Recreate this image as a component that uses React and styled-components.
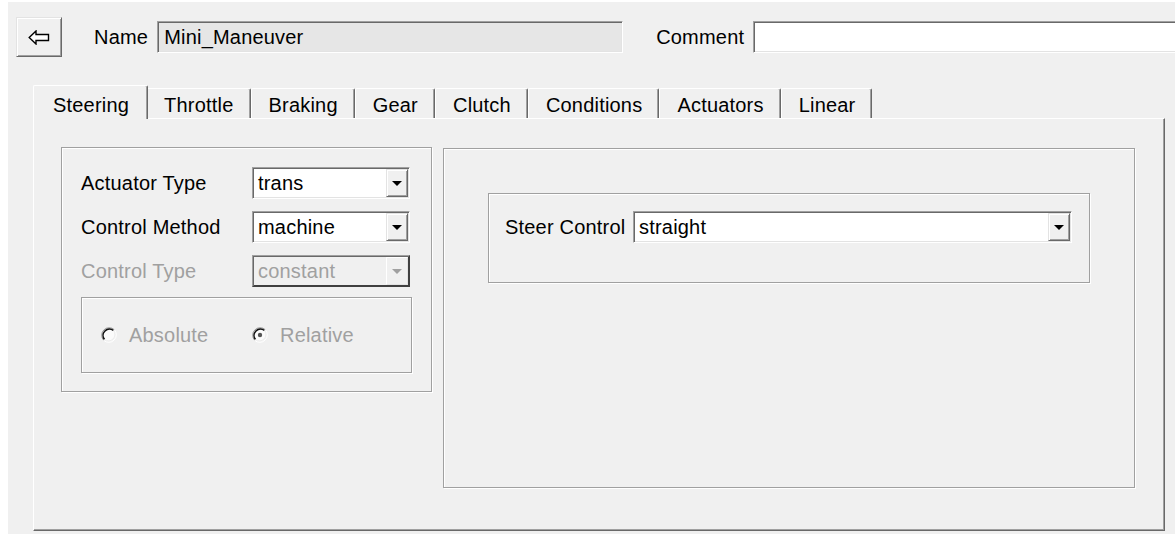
import React from 'react';
import styled, { createGlobalStyle, css } from 'styled-components';

const GlobalStyle = createGlobalStyle`
  html, body {
    margin: 0;
    background: #fff;
  }

  body {
    font-family: "Liberation Sans", Arial, sans-serif;
    font-size: 20px;
    letter-spacing: 0.2px;
    color: #000;
  }

  * {
    box-sizing: border-box;
  }
`;

const tabs = ['Steering', 'Throttle', 'Braking', 'Gear', 'Clutch', 'Conditions', 'Actuators', 'Linear'];

const BackArrow = () => (
  <svg width="22" height="15" viewBox="0 0 22 15">
    <path
      d="M1.2 7.5 L8 1 L8 4.5 L20.5 4.5 L20.5 10.5 L8 10.5 L8 14 Z"
      fill="#fff"
      stroke="#000"
      strokeWidth="1.4"
      strokeLinejoin="miter"
    />
  </svg>
);

const DropArrow = ({ disabled }) => (
  <svg width="10" height="5" viewBox="0 0 10 5">
    <path d="M0 0 H10 L5 5 Z" fill={disabled ? '#a0a0a0' : '#000'} />
  </svg>
);

// classic 3D radio: dark upper-left arcs, light lower-right arcs
const RadioMark = ({ checked }) => (
  <svg width="16" height="16" viewBox="0 0 16 16">
    <circle cx="8" cy="8" r="6.5" fill="#fbfbfb" />
    <path d="M2.7 13.3 A7.5 7.5 0 0 1 13.3 2.7" fill="none" stroke="#9a9a9a" />
    <path d="M3.5 12.5 A6.4 6.4 0 0 1 12.5 3.5" fill="none" stroke="#111" strokeWidth="1.6" />
    <path d="M13.3 2.7 A7.5 7.5 0 0 1 2.7 13.3" fill="none" stroke="#fff" />
    <path d="M12.5 3.5 A6.4 6.4 0 0 1 3.5 12.5" fill="none" stroke="#ececec" />
    {checked && <circle cx="8" cy="8" r="2.2" fill="#555" />}
  </svg>
);

const Combo = ({ value, disabled }) => (
  <ComboBox disabled={disabled}>
    <ComboText>{value}</ComboText>
    <DropButton disabled={disabled}>
      <DropArrow disabled={disabled} />
    </DropButton>
  </ComboBox>
);

const App = () => (
  <>
    <GlobalStyle />
    <Window>
      <TopBar>
        <BackButton>
          <BackArrow />
        </BackButton>
        <Label $gap={32}>Name</Label>
        <TextField $readonly $width={466}>Mini_Maneuver</TextField>
        <Label $gap={33}>Comment</Label>
        <TextField $grow />
      </TopBar>

      <TabStrip>
        {tabs.map((t, i) => (
          <Tab key={t} $active={i === 0}>
            {t}
          </Tab>
        ))}
      </TabStrip>

      <TabPanel>
        <LeftGroup>
          <FieldGrid>
            <FieldLabel>Actuator Type</FieldLabel>
            <Combo value="trans" />
            <FieldLabel>Control Method</FieldLabel>
            <Combo value="machine" />
            <FieldLabel disabled>Control Type</FieldLabel>
            <Combo value="constant" disabled />
          </FieldGrid>
          <RadioBox>
            <RadioItem>
              <RadioMark />
              <span>Absolute</span>
            </RadioItem>
            <RadioItem>
              <RadioMark checked />
              <span>Relative</span>
            </RadioItem>
          </RadioBox>
        </LeftGroup>

        <RightGroup>
          <SteerGroup>
            <FieldLabel>Steer Control</FieldLabel>
            <Combo value="straight" />
          </SteerGroup>
        </RightGroup>
      </TabPanel>
    </Window>
  </>
);

export default App;

const sunken = css`
  border: 1px solid;
  border-color: #a0a0a0 #fff #fff #a0a0a0;
  box-shadow: inset 1px 1px 0 #696969, inset -1px -1px 0 #e3e3e3;
`;

const raised = css`
  border: 1px solid;
  border-color: #e3e3e3 #696969 #696969 #e3e3e3;
  box-shadow: inset 1px 1px 0 #fff, inset -1px -1px 0 #a0a0a0;
`;

const etched = css`
  border: 1px solid #a0a0a0;
  box-shadow: inset 1px 1px 0 #fff, 1px 1px 0 #fff;
`;

const Window = styled.div`
  margin: 2px 0 0 8px;
  width: 1167px;
  height: 532px;
  background: #f0f0f0;
  overflow: hidden;
`;

const TopBar = styled.div`
  display: flex;
  align-items: center;
  padding: 15px 0 0 8px;
  height: 55px;
`;

const BackButton = styled.div`
  ${raised};
  width: 46px;
  height: 40px;
  display: flex;
  align-items: center;
  justify-content: center;
  background: #f0f0f0;
`;

const Label = styled.span`
  margin-left: ${(p) => p.$gap}px;
  margin-right: 9px;
  white-space: nowrap;
`;

const TextField = styled.div`
  ${sunken};
  height: 32px;
  padding: 0 6px;
  line-height: 30px;
  white-space: nowrap;
  background: ${(p) => (p.$readonly ? '#e6e6e6' : '#fff')};
  width: ${(p) => (p.$width ? `${p.$width}px` : 'auto')};
  flex: ${(p) => (p.$grow ? '1 0 auto' : '0 0 auto')};
  margin-right: ${(p) => (p.$grow ? '-8px' : '0')};
`;

const TabStrip = styled.div`
  display: flex;
  align-items: flex-end;
  margin: 28px 0 0 27px;
  height: 33px;
`;

const Tab = styled.div`
  height: 30px;
  padding: 2px 16px 0 17px;
  line-height: 28px;
  white-space: nowrap;
  border-top: 1px solid #fff;
  border-left: 1px solid #fff;
  border-right: 1px solid #696969;
  box-shadow: inset -1px 0 0 #a0a0a0;
  border-top-left-radius: 2px;
  border-top-right-radius: 2px;

  ${(p) =>
    p.$active &&
    css`
      position: relative;
      z-index: 1;
      height: 34px;
      margin: 0 -2px -1px -2px;
      padding: 5px 18px 0 19px;
      background: #f0f0f0;
    `}
`;

const TabPanel = styled.div`
  display: grid;
  grid-template-columns: 371px 692px;
  column-gap: 11px;
  align-items: start;
  margin-left: 25px;
  width: 1132px;
  height: 413px;
  padding: 28px 0 0 27px;
  border-top: 1px solid #fff;
  border-left: 1px solid #fff;
  border-right: 1px solid #696969;
  border-bottom: 1px solid #696969;
  box-shadow: inset -1px -1px 0 #a0a0a0;
`;

const LeftGroup = styled.div`
  ${etched};
  height: 245px;
  padding: 19px 19px 0 19px;
`;

const FieldGrid = styled.div`
  display: grid;
  grid-template-columns: 171px 158px;
  grid-auto-rows: 32px;
  row-gap: 12px;
  align-items: center;
`;

const FieldLabel = styled.span`
  white-space: nowrap;
  color: ${(p) => (p.disabled ? '#a0a0a0' : '#000')};
`;

const ComboBox = styled.div`
  ${sunken};
  display: flex;
  height: 32px;
  padding: 1px;
  background: ${(p) => (p.disabled ? '#f0f0f0' : '#fff')};
  color: ${(p) => (p.disabled ? '#a0a0a0' : '#000')};

  ${(p) =>
    p.disabled &&
    css`
      border-color: #a0a0a0 #404040 #404040 #a0a0a0;
      box-shadow: inset 1px 1px 0 #696969, inset -1px -1px 0 #404040;
    `}
`;

const ComboText = styled.span`
  flex: 1;
  padding-left: 4px;
  line-height: 28px;
  white-space: nowrap;
`;

const DropButton = styled.div`
  ${(p) =>
    p.disabled
      ? css`
          border: 1px solid;
          border-color: #fff #e3e3e3 #e3e3e3 #fff;
        `
      : raised};
  width: 22px;
  display: flex;
  align-items: center;
  justify-content: center;
  background: #f0f0f0;
`;

const RadioBox = styled.div`
  ${etched};
  display: flex;
  align-items: center;
  width: 331px;
  height: 76px;
  margin-top: 10px;
  padding-left: 19px;
  color: #a0a0a0;
`;

const RadioItem = styled.label`
  display: flex;
  align-items: center;
  gap: 12px;
  width: 151px;
`;

const RightGroup = styled.div`
  ${etched};
  height: 340px;
  margin-top: 1px;
  padding: 44px 0 0 44px;
`;

const SteerGroup = styled.div`
  ${etched};
  display: grid;
  grid-template-columns: 128px 439px;
  align-items: center;
  align-content: start;
  width: 602px;
  height: 90px;
  padding: 17px 0 0 16px;
`;
